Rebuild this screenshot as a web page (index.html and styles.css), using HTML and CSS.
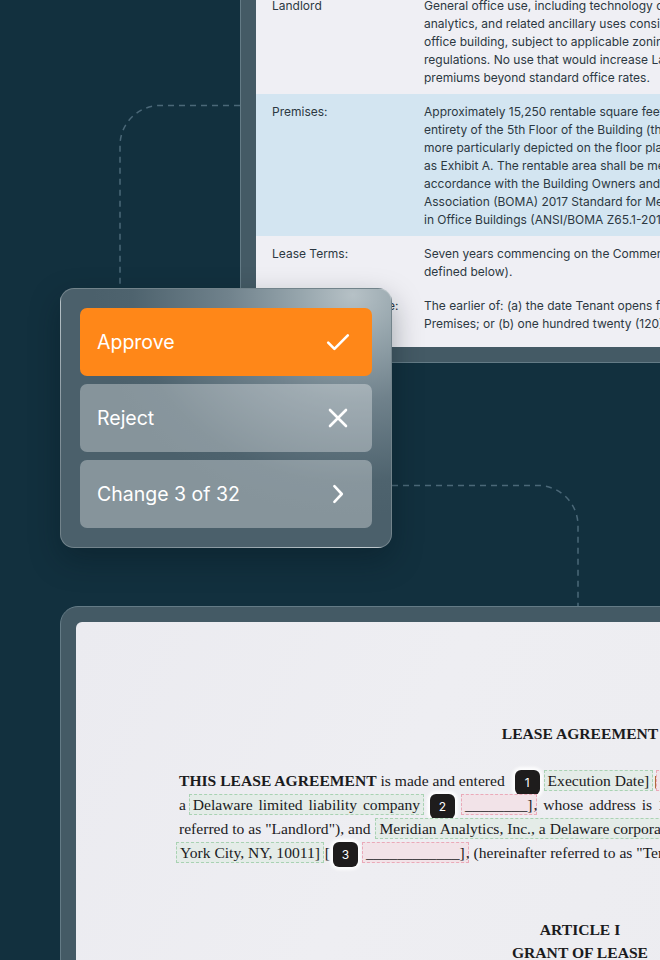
FILE: index.html
```html
<!DOCTYPE html>
<html lang="en">
<head>
<meta charset="utf-8">
<title>Lease review</title>
<link rel="stylesheet" href="styles.css">
</head>
<body>
<div class="stage">
  <svg class="links" width="660" height="960" viewBox="0 0 660 960" aria-hidden="true">
    <path d="M240 105.5 H160 A40 40 0 0 0 120 145.5 V288" />
    <path d="M392 485.5 H538 A40 40 0 0 1 578 525.5 V606" />
  </svg>

  <section class="win win-top">
    <div class="terms">
      <div class="row">
        <div class="lbl">Landlord</div>
        <div class="val">General office use, including technology consulting, data<br>analytics, and related ancillary uses consistent with a Class A<br>office building, subject to applicable zoning laws and<br>regulations. No use that would increase Landlord's insurance<br>premiums beyond standard office rates.</div>
      </div>
      <div class="row row-active">
        <div class="lbl">Premises:</div>
        <div class="val">Approximately 15,250 rentable square feet comprising the<br>entirety of the 5th Floor of the Building (the "Premises"), as<br>more particularly depicted on the floor plan attached hereto<br>as Exhibit A. The rentable area shall be measured in<br>accordance with the Building Owners and Managers<br>Association (BOMA) 2017 Standard for Measurement<br>in Office Buildings (ANSI/BOMA Z65.1-2017).</div>
      </div>
      <div class="row">
        <div class="lbl">Lease Terms:</div>
        <div class="val">Seven years commencing on the Commencement Date (as<br>defined below).</div>
      </div>
      <div class="row">
        <div class="lbl">Commencement Date:</div>
        <div class="val">The earlier of: (a) the date Tenant opens for business in the<br>Premises; or (b) one hundred twenty (120) days after delivery.</div>
      </div>
      <div class="row">
        <div class="lbl">Base Rent:</div>
        <div class="val">As set forth in Article III below.</div>
      </div>
    </div>
  </section>

  <section class="win win-bottom">
    <div class="page">
      <div class="page-col">
        <h1 class="title">LEASE AGREEMENT</h1>
        <div class="para">
          <div class="ln"><b>THIS LEASE AGREEMENT</b> is made and entered <span class="badge badge-first">1</span> <span class="hl hl-ok">Execution Date]</span> [<span class="hl hl-miss">__________</span>], by and between</div>
          <div class="ln ln-wide">a <span class="hl hl-ok">Delaware limited liability company</span> <span class="badge">2</span> <span class="hl hl-miss">________]</span>, whose address is 100 Park Avenue,</div>
          <div class="ln">referred to as "Landlord"), and <span class="hl hl-ok hl-far">Meridian Analytics, Inc., a Delaware corporation, 210 West 18th Street, New</span></div>
          <div class="ln"><span class="hl hl-ok">York City, NY, 10011]</span> [<span class="badge">3</span> <span class="hl hl-miss">____________]</span>, (hereinafter referred to as "Tenant").</div>
        </div>
        <h2 class="article">ARTICLE I<br>GRANT OF LEASE</h2>
      </div>
    </div>
  </section>

  <div class="panel">
    <button class="act act-approve" type="button">
      <span>Approve</span>
      <svg class="ico" viewBox="0 0 24 24"><path d="M2.2 12.6 L8.4 18.8 L21.8 5.4" /></svg>
    </button>
    <button class="act" type="button">
      <span>Reject</span>
      <svg class="ico" viewBox="0 0 24 24"><path d="M4 4 L20 20 M20 4 L4 20" /></svg>
    </button>
    <button class="act" type="button">
      <span>Change 3 of 32</span>
      <svg class="ico" viewBox="0 0 24 24"><path d="M8.4 4.2 L15.8 12 L8.4 19.8" /></svg>
    </button>
  </div>
</div>
</body>
</html>
```

FILE: styles.css
```css
html, body {
  margin: 0;
  padding: 0;
  background: #12303e;
  overflow: hidden;
}

.stage {
  position: relative;
  width: 660px;
  height: 960px;
  overflow: hidden;
  background: #12303e;
}

.links {
  position: absolute;
  left: 0;
  top: 0;
  fill: none;
  stroke: #4b6878;
  stroke-width: 1.5;
  stroke-dasharray: 6 5;
}

/* window frames */
.win {
  box-sizing: border-box;
  background: #445a65;
  border: 1px solid #647b86;
  padding: 15px;
}

.win-top {
  margin: -28px 0 0 240px;
  width: 640px;
  border-radius: 16px;
}

.win-bottom {
  margin: 243px 0 0 60px;
  width: 720px;
  border-radius: 18px;
}

/* top document: term table */
.terms {
  height: 359px;
  overflow: hidden;
  background: #efeff4;
  border-radius: 6px;
  font-family: Inter, "Liberation Sans", sans-serif;
  font-size: 12px;
  line-height: 18px;
  color: #2c3842;
}

.row {
  display: grid;
  grid-template-columns: 152px 1fr;
  padding: 9px 16px 7px;
}

.row-active {
  background: #d3e5f1;
}

.val {
  white-space: nowrap;
}

/* bottom document: lease page */
.page {
  height: 420px;
  background: linear-gradient(115deg, #ebebf0 0%, #eeeef2 45%, #ececf0 100%);
  border-radius: 6px;
  padding: 100px 0 0 103px;
  box-sizing: border-box;
  color: #1b1b1d;
  font-family: "Liberation Serif", "Times New Roman", serif;
}

.page-col {
  width: 802px;
}

.title {
  margin: 0;
  font-size: 15.6px;
  line-height: 24px;
  font-weight: bold;
  text-align: center;
}

.para {
  margin-top: 23px;
  font-size: 15.6px;
  line-height: 24px;
  white-space: nowrap;
}

.ln-wide {
  word-spacing: 2px;
}

.article {
  margin: 53px 0 0;
  font-size: 15.6px;
  line-height: 23px;
  font-weight: bold;
  text-align: center;
}

.hl {
  padding: 1px 3px;
  margin: 0 -3px;
  border: 1px dashed transparent;
}

.hl-far {
  margin-left: 1px;
}

.hl-ok {
  background: #e4ece8;
  border-color: #a9d2b3;
}

.hl-miss {
  background: #f2e3e8;
  border-color: #eaaab9;
}

.badge {
  display: inline-block;
  width: 25px;
  height: 25px;
  margin: -6px 3px;
  border-radius: 6px;
  background: #1e1c1c;
  color: #ffffff;
  font-family: Inter, "Liberation Sans", sans-serif;
  font-size: 12px;
  line-height: 25px;
  text-align: center;
  vertical-align: middle;
  word-spacing: 0;
  box-shadow: 0 0 3px 3px rgba(255, 255, 255, 0.85);
}

.badge-first {
  margin-left: 6px;
}

/* floating action panel */
.panel {
  position: absolute;
  left: 60px;
  top: 288px;
  width: 332px;
  box-sizing: border-box;
  padding: 19px;
  display: flex;
  flex-direction: column;
  gap: 8px;
  border: 1px solid rgba(255, 255, 255, 0.22);
  border-radius: 14px;
  background:
    radial-gradient(ellipse 260px 220px at 292px 6px, #b6c1c6 0%, #97a6ad 20%, #70828c 48%, #4e636e 85%, #4b606b 100%);
  box-shadow: 0 12px 30px rgba(5, 20, 28, 0.35);
}

.act {
  height: 68px;
  width: 100%;
  box-sizing: border-box;
  border: 0;
  border-radius: 7px;
  padding: 0 22px 0 17px;
  display: flex;
  align-items: center;
  justify-content: space-between;
  background: rgba(255, 255, 255, 0.33);
  color: #ffffff;
  font-family: Inter, "Liberation Sans", sans-serif;
  font-size: 19.5px;
  font-weight: 400;
  text-align: left;
}

.act-approve {
  background: #ff8718;
}

.ico {
  width: 24px;
  height: 24px;
  fill: none;
  stroke: #ffffff;
  stroke-width: 2.6;
  stroke-linecap: round;
  stroke-linejoin: round;
}
```
